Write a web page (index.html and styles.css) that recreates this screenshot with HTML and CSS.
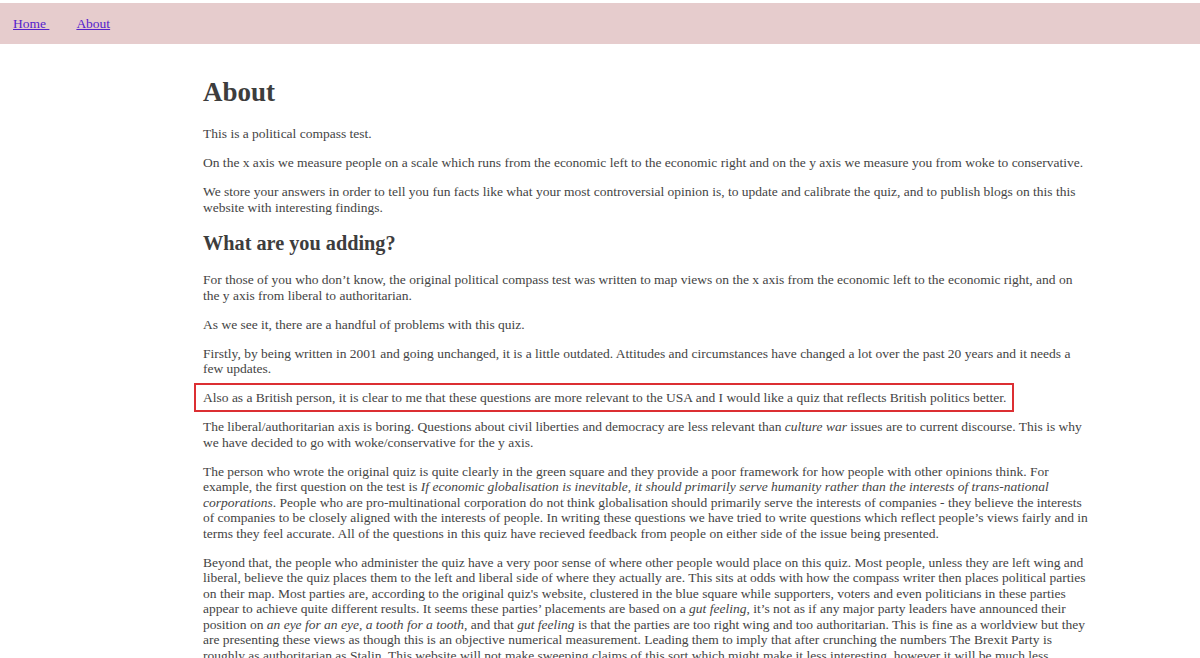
FILE: index.html
```html
<!DOCTYPE html>
<html lang="en">
<head>
<meta charset="utf-8">
<title>About</title>
<link rel="stylesheet" href="styles.css">
</head>
<body>
<nav class="topbar">
  <a class="nav-link" href="#">Home&nbsp;</a>
  <a class="nav-link" href="#">About</a>
</nav>
<main class="content">
  <h1 class="title">About</h1>
  <p>This is a political compass test.</p>
  <p>On the x axis we measure people on a scale which runs from the economic left to the economic right and on the y axis we measure you from woke to conservative.</p>
  <p>We store your answers in order to tell you fun facts like what your most controversial opinion is, to update and calibrate the quiz, and to publish blogs on this this website with interesting findings.</p>
  <h2 class="subtitle">What are you adding?</h2>
  <p>For those of you who don’t know, the original political compass test was written to map views on the x axis from the economic left to the economic right, and on the y axis from liberal to authoritarian.</p>
  <p>As we see it, there are a handful of problems with this quiz.</p>
  <p>Firstly, by being written in 2001 and going unchanged, it is a little outdated. Attitudes and circumstances have changed a lot over the past 20 years and it needs a few updates.</p>
  <p class="boxed">Also as a British person, it is clear to me that these questions are more relevant to the USA and I would like a quiz that reflects British politics better.</p>
  <p>The liberal/authoritarian axis is boring. Questions about civil liberties and democracy are less relevant than <em>culture war</em> issues are to current discourse. This is why we have decided to go with woke/conservative for the y axis.</p>
  <p>The person who wrote the original quiz is quite clearly in the green square and they provide a poor framework for how people with other opinions think. For example, the first question on the test is <em>If economic globalisation is inevitable, it should primarily serve humanity rather than the interests of trans-national corporations</em>. People who are pro-multinational corporation do not think globalisation should primarily serve the interests of companies - they believe the interests of companies to be closely aligned with the interests of people. In writing these questions we have tried to write questions which reflect people’s views fairly and in terms they feel accurate. All of the questions in this quiz have recieved feedback from people on either side of the issue being presented.</p>
  <p>Beyond that, the people who administer the quiz have a very poor sense of where other people would place on this quiz. Most people, unless they are left wing and liberal, believe the quiz places them to the left and liberal side of where they actually are. This sits at odds with how the compass writer then places political parties on their map. Most parties are, according to the original quiz's website, clustered in the blue square while supporters, voters and even politicians in these parties appear to achieve quite different results. It seems these parties’ placements are based on a <em>gut feeling</em>, it’s not as if any major party leaders have announced their position on <em>an eye for an eye, a tooth for a tooth</em>, and that <em>gut feeling</em> is that the parties are too right wing and too authoritarian. This is fine as a worldview but they are presenting these views as though this is an objective numerical measurement. Leading them to imply that after crunching the numbers The Brexit Party is roughly as authoritarian as Stalin. This website will not make sweeping claims of this sort which might make it less interesting, however it will be much less misleading.</p>
</main>
</body>
</html>
```
FILE: styles.css
```css
html, body {
  margin: 0;
  padding: 0;
  background: #ffffff;
}

body {
  font-family: "Liberation Serif", "Times New Roman", serif;
  font-size: 13.5px;
  line-height: 15.5px;
  color: #444444;
}

.topbar {
  margin-top: 3px;
  height: 41px;
  background: #e6cccd;
  display: flex;
  align-items: center;
  gap: 27px;
  padding-left: 13px;
}

.nav-link {
  color: #5522cc;
  text-decoration: underline;
}

.content {
  width: 889px;
  margin-left: 203px;
  padding-top: 15px;
}

.title {
  font-size: 27px;
  line-height: 31px;
  margin: 18px 0;
  color: #3d3d3d;
}

.subtitle {
  font-size: 20.25px;
  line-height: 23px;
  margin: 17px 0;
  color: #3d3d3d;
}

p {
  margin: 13.5px 0;
}

.boxed {
  position: relative;
  width: fit-content;
}

.boxed::after {
  content: "";
  position: absolute;
  top: -7px;
  bottom: -6px;
  left: -9px;
  right: -8px;
  border: 2px solid #dc2f33;
  pointer-events: none;
}
```
